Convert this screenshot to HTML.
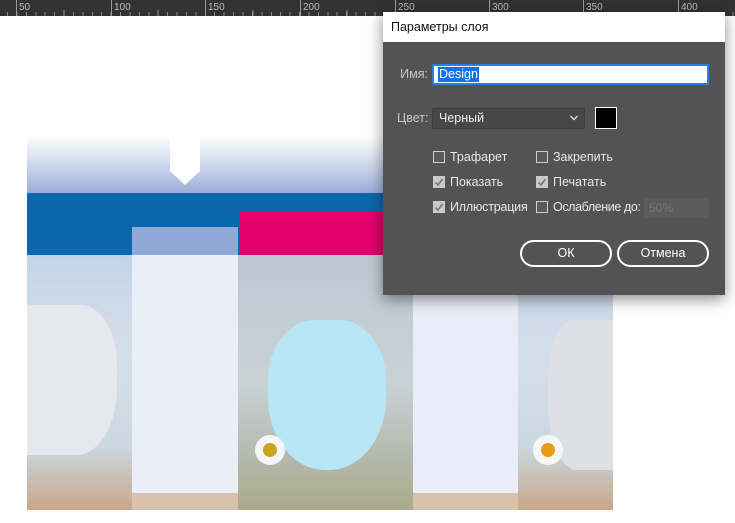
<!DOCTYPE html>
<html><head><meta charset="utf-8"><style>
*{margin:0;padding:0;box-sizing:border-box}
body{width:735px;height:523px;background:#fff;position:relative;overflow:hidden;font-family:"Liberation Sans","DejaVu Sans",sans-serif}
.a{position:absolute}
.rl{font-size:10px;color:#bdbdbd;top:2px}
.lbl{color:#c8c8c8;font-size:12.5px}
.cb{width:12px;height:12px;border:1px solid #cfcfcf;background:#5a5a5a}
.cb.on{background:#c9c9c9;border-color:#c9c9c9}
.ct{font-size:12.5px;color:#e8e8e8}
.btn{border:2px solid #fff;border-radius:14px;color:#fff;font-size:12.5px;text-align:center;line-height:23px;height:27px}
</style></head><body>
<!-- ruler -->
<div class="a" style="left:0;top:0;width:735px;height:16px;background:#323232"></div>
<div class="a" style="left:7px;top:12px;width:728px;height:4px;background:repeating-linear-gradient(90deg,#8a8a8a 0 1px,transparent 1px 9.42px)"></div>
<svg class="a" style="left:0;top:0" width="735" height="16">
<g stroke="#9a9a9a">
<line x1="16.5" y1="0" x2="16.5" y2="16"/><line x1="111.5" y1="0" x2="111.5" y2="16"/><line x1="205.5" y1="0" x2="205.5" y2="16"/><line x1="300.5" y1="0" x2="300.5" y2="16"/><line x1="395.5" y1="0" x2="395.5" y2="16"/><line x1="489.5" y1="0" x2="489.5" y2="16"/><line x1="583.5" y1="0" x2="583.5" y2="16"/><line x1="678.5" y1="0" x2="678.5" y2="16"/>
<line x1="64" y1="10" x2="64" y2="16"/><line x1="158" y1="10" x2="158" y2="16"/><line x1="253" y1="10" x2="253" y2="16"/><line x1="347" y1="10" x2="347" y2="16"/>
</g>
</svg>
<div class="a rl" style="left:19px">50</div><div class="a rl" style="left:114px">100</div><div class="a rl" style="left:208px">150</div><div class="a rl" style="left:303px">200</div><div class="a rl" style="left:398px">250</div><div class="a rl" style="left:492px">300</div><div class="a rl" style="left:586px">350</div><div class="a rl" style="left:681px">400</div>

<!-- artwork -->
<div class="a" style="left:27px;top:135px;width:586px;height:59px;background:linear-gradient(#fff,#c5d0ea 60%,#98acd8)"></div>
<svg class="a" style="left:170px;top:135px" width="30" height="51"><path d="M0 0H30V36L15 50L0 36Z" fill="#fff"/></svg>
<div class="a" style="left:27px;top:193px;width:586px;height:62px;background:#0a67ad"></div>
<div class="a" style="left:239px;top:211px;width:160px;height:44px;background:#e4006b"></div>
<div class="a" style="left:27px;top:255px;width:105px;height:255px;background:linear-gradient(#c4d4e8,#d5dfea 40%,#cbd8e0 75%,#c8a78a)"></div>
<div class="a" style="left:27px;top:305px;width:90px;height:150px;border-radius:0 40% 45% 0;background:#e6e8ee"></div>
<div class="a" style="left:132px;top:227px;width:106px;height:28px;background:#8fa9d7"></div>
<div class="a" style="left:132px;top:255px;width:106px;height:238px;background:#eaeef7"></div>
<div class="a" style="left:132px;top:493px;width:106px;height:17px;background:#d8c2ad"></div>
<div class="a" style="left:238px;top:255px;width:175px;height:255px;background:linear-gradient(#bcc8d2,#c9d2d6 50%,#b4b8ac 80%,#a9ac88)"></div>
<div class="a" style="left:268px;top:320px;width:118px;height:150px;border-radius:40% 40% 48% 48%;background:#b9e6f6"></div>
<div class="a" style="left:255px;top:435px;width:30px;height:30px;border-radius:50%;background:#f4f6f8"></div>
<div class="a" style="left:263px;top:443px;width:14px;height:14px;border-radius:50%;background:#c7a51f"></div>
<div class="a" style="left:413px;top:255px;width:105px;height:238px;background:#eaecf7"></div>
<div class="a" style="left:413px;top:493px;width:105px;height:17px;background:#d8c2ad"></div>
<div class="a" style="left:518px;top:255px;width:95px;height:255px;background:linear-gradient(#c4d4e8,#d5dfea 40%,#cbd8e0 75%,#c8a78a)"></div>
<div class="a" style="left:548px;top:320px;width:65px;height:150px;border-radius:40% 0 0 45%;background:#dfe0e6"></div>
<div class="a" style="left:533px;top:435px;width:30px;height:30px;border-radius:50%;background:#f4f6f8"></div>
<div class="a" style="left:541px;top:443px;width:14px;height:14px;border-radius:50%;background:#e59c14"></div>

<!-- dialog -->
<div class="a" style="left:383px;top:12px;width:342px;height:283px;background:#535353;box-shadow:0 4px 14px rgba(0,0,0,.45)">
 <div class="a" style="left:0;top:0;width:342px;height:30px;background:#fff"></div>
 <div class="a" style="left:8px;top:8px;font-size:12.5px;color:#111">Параметры слоя</div>
 <div class="a lbl" style="right:297px;top:55px">Имя:</div>
 <div class="a" style="left:49px;top:52px;width:277px;height:21px;background:#fff;border:2px solid #2680eb;border-radius:2px"></div>
 <div class="a" style="left:55px;top:55px;height:15px;line-height:15px;padding:0 1px;background:#1473e6;color:#fff;font-size:12.5px">Design</div>
 <div class="a lbl" style="left:14px;top:99px">Цвет:</div>
 <div class="a" style="left:49px;top:96px;width:153px;height:21px;background:#474747;border:1px solid #3c3c3c;border-radius:2px"></div>
 <div class="a" style="left:56px;top:99px;font-size:12.5px;color:#f0f0f0">Черный</div>
 <svg class="a" style="left:186px;top:102px" width="10" height="8"><path d="M1.5 2L5 5.5L8.5 2" stroke="#ddd" stroke-width="1.4" fill="none"/></svg>
 <div class="a" style="left:212px;top:95px;width:22px;height:22px;background:#000;border:1px solid #fff"></div>

 <div class="a" style="left:261px;top:186px;width:65px;height:20px;background:#5b5b5b"></div>
 <div class="a" style="left:266px;top:189px;font-size:12px;color:#777">50%</div>

 <div class="a cb" style="left:50px;top:139px"></div><div class="a ct" style="left:67px;top:138px">Трафарет</div>
 <div class="a cb" style="left:153px;top:139px"></div><div class="a ct" style="left:170px;top:138px">Закрепить</div>
 <div class="a cb on" style="left:50px;top:164px"></div><div class="a ct" style="left:67px;top:163px">Показать</div>
 <div class="a cb on" style="left:153px;top:164px"></div><div class="a ct" style="left:170px;top:163px">Печатать</div>
 <div class="a cb on" style="left:50px;top:189px"></div><div class="a ct" style="left:67px;top:188px;letter-spacing:-0.2px">Иллюстрация</div>
 <div class="a cb" style="left:153px;top:189px"></div><div class="a ct" style="left:170px;top:188px;letter-spacing:-0.4px">Ослабление до:</div>
 <svg class="a" style="left:50px;top:164px" width="12" height="12"><path d="M2.5 6.5L5 9L9.5 3" stroke="#777" stroke-width="1.6" fill="none"/></svg>
 <svg class="a" style="left:153px;top:164px" width="12" height="12"><path d="M2.5 6.5L5 9L9.5 3" stroke="#777" stroke-width="1.6" fill="none"/></svg>
 <svg class="a" style="left:50px;top:189px" width="12" height="12"><path d="M2.5 6.5L5 9L9.5 3" stroke="#777" stroke-width="1.6" fill="none"/></svg>

 <div class="a btn" style="left:137px;top:228px;width:92px">ОК</div>
 <div class="a btn" style="left:234px;top:228px;width:92px">Отмена</div>
</div>
</body></html>
